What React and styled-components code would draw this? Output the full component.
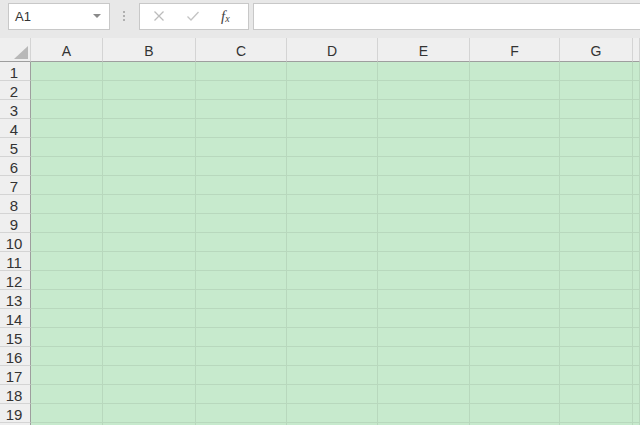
import React from "react";
import styled, { createGlobalStyle } from "styled-components";

const GlobalStyle = createGlobalStyle`
  html, body {
    margin: 0;
    padding: 0;
    background: #e8e8e8;
    overflow: hidden;
  }
  body {
    font-family: "Liberation Sans", Arial, sans-serif;
  }
`;

const columns = ["A", "B", "C", "D", "E", "F", "G", ""];
const widths = [31, 72, 93, 91, 91, 92, 90, 73];
// row 20 only peeks in at the bottom edge, so it gets no label
const rows = Array.from({ length: 20 }, (_, i) => (i < 19 ? i + 1 : ""));

const App = () => {
  const template = widths.map((w) => `${w}px`).join(" ") + " 1fr";

  return (
    <>
      <GlobalStyle />
      <Page>
        <Toolbar>
          <NameBox>
            <span>A1</span>
            <Caret />
          </NameBox>
          <Grip>
            <i />
            <i />
            <i />
          </Grip>
          <FormulaButtons>
            <svg width="12" height="12" viewBox="0 0 12 12">
              <path d="M1.5 1.5 L10.5 10.5 M10.5 1.5 L1.5 10.5" stroke="#bcbcbc" strokeWidth="1.3" fill="none" />
            </svg>
            <svg width="14" height="12" viewBox="0 0 14 12">
              <path d="M1.5 6.5 L5 10 L12.5 2" stroke="#c4c4c4" strokeWidth="1.3" fill="none" />
            </svg>
            <Fx>
              f<sub>x</sub>
            </Fx>
          </FormulaButtons>
          <FormulaInput />
        </Toolbar>

        <Sheet $template={template}>
          <Corner>
            <svg width="14" height="13" viewBox="0 0 14 13">
              <polygon points="14,0 14,13 0,13" fill="#b8b8b8" />
            </svg>
          </Corner>
          {columns.map((c, i) => (
            <ColHead key={i}>{c}</ColHead>
          ))}
          {rows.map((r, ri) => (
            <React.Fragment key={ri}>
              <RowHead>{r}</RowHead>
              {columns.map((c, i) => (
                <Cell key={i} />
              ))}
            </React.Fragment>
          ))}
        </Sheet>
      </Page>
    </>
  );
};

const Page = styled.div`
  width: 640px;
  height: 425px;
  overflow: hidden;
  background: #e8e8e8;
`;

const Toolbar = styled.div`
  display: flex;
  align-items: center;
  height: 38px;
  padding: 0 0 0 8px;
  box-sizing: border-box;
`;

const NameBox = styled.div`
  display: flex;
  align-items: center;
  justify-content: space-between;
  width: 102px;
  height: 27px;
  margin-top: -6px;
  box-sizing: border-box;
  background: #fff;
  border: 1px solid #c8c8c8;
  padding: 0 8px 0 6px;
  font-size: 13px;
  color: #333;
`;

const Caret = styled.span`
  width: 0;
  height: 0;
  border-left: 4px solid transparent;
  border-right: 4px solid transparent;
  border-top: 4px solid #8a8a8a;
`;

const Grip = styled.div`
  display: flex;
  flex-direction: column;
  gap: 2px;
  margin: -6px 14px 0 13px;
  i {
    width: 2px;
    height: 2px;
    background: #b0b0b0;
  }
`;

const FormulaButtons = styled.div`
  display: flex;
  align-items: center;
  gap: 21px;
  width: 110px;
  height: 27px;
  margin-top: -6px;
  box-sizing: border-box;
  background: #fff;
  border: 1px solid #c8c8c8;
  padding: 0 0 0 13px;
`;

const Fx = styled.span`
  font-family: "Liberation Serif", "Times New Roman", serif;
  font-style: italic;
  font-size: 15px;
  color: #444;
  sub {
    font-size: 10px;
    vertical-align: -1px;
  }
`;

const FormulaInput = styled.div`
  flex: 1;
  height: 27px;
  margin: -6px 0 0 4px;
  box-sizing: border-box;
  background: #fff;
  border: 1px solid #c8c8c8;
  border-right: none;
`;

const Sheet = styled.div`
  display: grid;
  grid-template-columns: ${(p) => p.$template};
  grid-template-rows: 24px;
  grid-auto-rows: 19px;
`;

const Corner = styled.div`
  display: flex;
  align-items: flex-end;
  justify-content: flex-end;
  padding: 0 2px 2px 0;
  box-sizing: border-box;
  background: #efefef;
  border-right: 1px solid #d4d4d4;
  border-bottom: 1px solid #9e9e9e;
`;

const ColHead = styled.div`
  display: flex;
  align-items: center;
  justify-content: center;
  padding-top: 2px;
  box-sizing: border-box;
  background: #efefef;
  border-right: 1px solid #d4d4d4;
  border-bottom: 1px solid #9e9e9e;
  font-size: 14px;
  color: #333;
`;

const RowHead = styled.div`
  display: flex;
  align-items: center;
  justify-content: center;
  padding: 2px 2px 0 0;
  box-sizing: border-box;
  background: #efefef;
  border-right: 1px solid #9e9e9e;
  border-bottom: 1px solid #d4d4d4;
  font-size: 15px;
  color: #333;
`;

const Cell = styled.div`
  box-sizing: border-box;
  background: #c7eacd;
  border-right: 1px solid #b8d8bd;
  border-bottom: 1px solid #b8d8bd;
`;

export default App;
